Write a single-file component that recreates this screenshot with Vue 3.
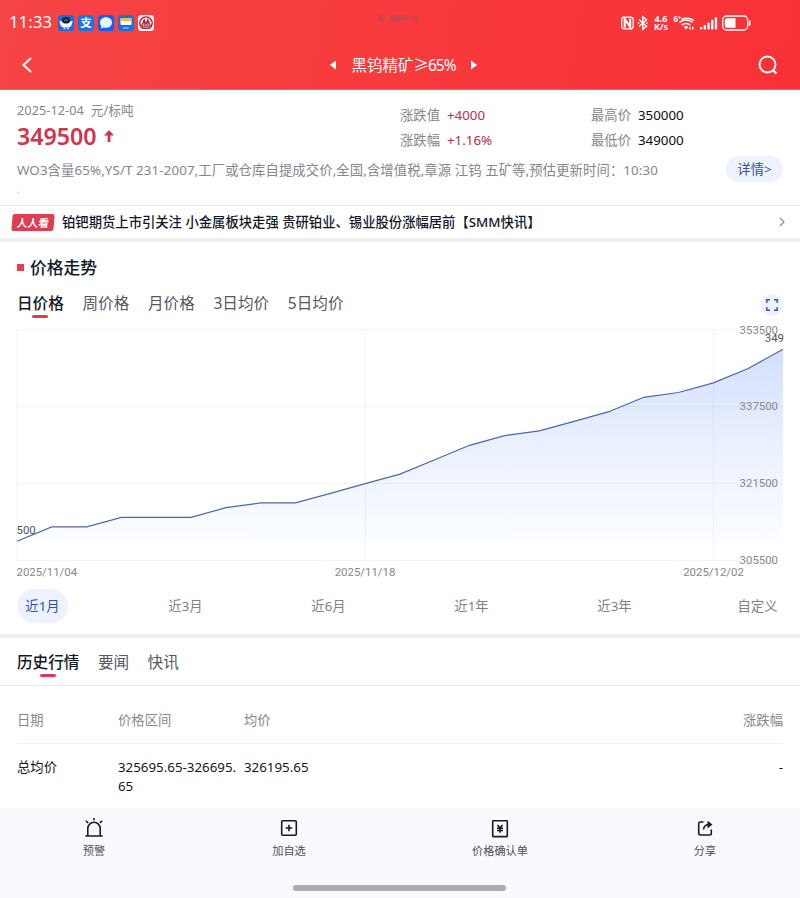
<script setup>
import { computed } from 'vue'

const priceTabs = ['日价格', '周价格', '月价格', '3日均价', '5日均价']
const ranges = ['近1月', '近3月', '近6月', '近1年', '近3年', '自定义']
const historyTabs = ['历史行情', '要闻', '快讯']

const prices = [
  309500, 312500, 312500, 314500, 314500, 314500, 316500, 317500, 317500, 319500, 321500, 323500,
  326500, 329500, 331500, 332500, 334500, 336500, 339500, 340500, 342500, 345500, 349500
]
const axis = [353500, 337500, 321500, 305500]
const left = 17
const right = 783
const toX = (i) => left + (i * (right - left)) / (prices.length - 1)
const toY = (v) => 230.5 - (v - 305500) * 0.0048
const line = computed(() => prices.map((v, i) => `${toX(i).toFixed(1)},${toY(v).toFixed(1)}`).join(' '))
const area = computed(() => `${line.value} ${right},${toY(prices[0])} ${left},${toY(prices[0])}`)
</script>

<template>
  <div class="page">
    <header class="top">
      <div class="status">
        <span class="clock">11:33</span>
        <div class="apps">
          <svg viewBox="0 0 16 16"><rect width="16" height="16" rx="3.5" fill="#176be0" /><path d="M1.500 5.500q2 1 3 1h7q2 0 3-1Q14.500 11 11 12.500H5Q1.500 11 1.500 5.500z" fill="#fff" /><rect x="4" y="2.300" width="8" height="6.200" rx="3" fill="#102334" /><path d="M6.300 5.500q1.700-1.500 3.400 0" stroke="#6fa6b5" fill="none" /><path d="M5.500 13.800h2M9 13.800h2" stroke="#fff" /></svg>
          <svg viewBox="0 0 16 16"><rect width="16" height="16" rx="3.5" fill="#1775ed" /><text x="8" y="12.2" text-anchor="middle" class="zhi">支</text></svg>
          <svg viewBox="0 0 16 16"><rect width="16" height="16" rx="3.5" fill="#0d63ed" /><path d="M8 2.2c3.6 0 6 2.3 6 5.3s-2.400 5.300-6 5.300c-1 0-1.700-.1-2.300-.4L3 13.500l.2-2.400C2.400 10.200 2 9 2 7.500c0-3 2.400-5.300 6-5.300z" fill="#e9f4ff" /></svg>
          <svg viewBox="0 0 16 16"><rect width="16" height="16" rx="3.500" fill="#176fe5" /><rect x="2.500" y="3" width="11" height="7" rx="1" fill="#fff" /><path d="M2.500 6V4q0-1 1-1h9q1 0 1 1v2z" fill="#e9bf54" /><path d="M5 13h6" stroke="#9dd4ff" stroke-width="1.500" stroke-dasharray="1.500 .5" /></svg>
          <svg viewBox="0 0 16 16"><rect width="16" height="16" rx="3.500" fill="#fff2f2" /><path d="M4.500 13.200A6.200 6.200 0 1 1 11.500 13.200z" fill="none" stroke="#a82535" stroke-width="1.400" /><path d="M3.500 11.200 6.200 4.500 8 9.500l1.800-5 2.700 6.700M6.200 6v5.200M9.800 6v5.200M3.500 11.300h9" fill="none" stroke="#a82535" stroke-width="1.100" /></svg>
        </div>
        <div class="camera"><i></i><b></b><i></i></div>
        <svg class="signals" viewBox="0 0 134 20">
          <g fill="none" stroke="#fff">
            <rect x="1.700" y="4.200" width="11.500" height="11.600" rx="2.500" stroke-width="1.300" />
            <path d="M4.700 14.500V6l5.500 8V5.500" stroke-width="2.100" />
            <path d="m19 6.500 7.500 6.800-3.700 3V3.700l3.700 3-7.500 6.800M17.800 10h1.500M26 10h1.500" stroke-width="1.500" />
            <path d="M59.500 9.300q6.500-4.500 13 0M61.800 12q4.200-3 8.400 0" stroke-width="1.600" />
            <path d="M61.500 6.300q6.500-2.800 12.500 1.200" stroke-width="1.500" />
            <rect x="102.700" y="3" width="25" height="14" rx="4" stroke-width="1.300" />
            <path d="M129.700 8v4" stroke-width="1.700" stroke-linecap="round" />
          </g>
          <g fill="#fff">
            <path d="M63.800 13.700q2.200-1.600 4.400 0L66 16.700zM70.600 13v4.200l-2-2.100zM72 13v4.200l2-2.100z" />
            <rect x="80" y="14" width="2.300" height="2.500" rx=".7" /><rect x="83.700" y="12" width="2.300" height="4.500" rx=".7" /><rect x="87.400" y="9.500" width="2.300" height="7" rx=".7" /><rect x="91.100" y="6.800" width="2.300" height="9.700" rx=".7" /><rect x="94.800" y="4" width="2.300" height="12.500" rx=".7" />
            <path d="M107 5.200h8.500v9.600H107q-2.200 0-2.200-2.200V7.400q0-2.200 2.200-2.200z" />
            <text x="41" y="8.800" text-anchor="middle" class="tiny">4.6</text>
            <text x="41" y="17.300" text-anchor="middle" class="tiny">K/s</text>
            <text x="53.500" y="8.500" class="six">6</text><path d="M58.300 4h2.600v1h-2.600zM59.100 3.200h1v2.600h-1z" />
          </g>
        </svg>
      </div>
      <nav class="nav">
        <svg class="back" viewBox="0 0 12 18"><path d="M10 2 2.500 9l7.500 7" fill="none" stroke="#fff" stroke-width="2" /></svg>
        <div class="product">
          <svg viewBox="0 0 6 10"><path d="M6 .5v9L0 5z" fill="#fff" /></svg>
          <span>黑钨精矿<b>≥65%</b></span>
          <svg viewBox="0 0 6 10"><path d="M0 .5v9L6 5z" fill="#fff" /></svg>
        </div>
        <svg class="search" viewBox="0 0 20 20"><circle cx="9.500" cy="9.500" r="8" fill="none" stroke="#fff" stroke-width="1.900" /><path d="m15.500 15.500 2.800 3" stroke="#fff" stroke-width="2.200" /></svg>
      </nav>
    </header>

    <section class="info">
      <div class="quote">
        <div class="main-quote">
          <div class="date">2025-12-04&nbsp; 元/标吨</div>
          <div class="price"><span>349500</span><svg viewBox="0 0 10 13"><path d="M5 0 10 5.500H6.400V12H3.600V5.500H0z" fill="#d0354d" /></svg></div>
        </div>
        <dl class="change">
          <div><dt>涨跌值</dt><dd class="red">+4000</dd></div>
          <div><dt>涨跌幅</dt><dd class="red">+1.16%</dd></div>
        </dl>
        <dl class="extremes">
          <div><dt>最高价</dt><dd>350000</dd></div>
          <div><dt>最低价</dt><dd>349000</dd></div>
        </dl>
      </div>
      <div class="desc">
        <p>WO3含量65%,YS/T 231-2007,工厂或仓库自提成交价,全国,含增值税,章源 江钨 五矿等,预估更新时间：10:30</p>
        <button class="detail">详情&gt;</button>
      </div>
      <div class="dot">.</div>
    </section>

    <section class="news">
      <span class="badge"><em>人人看</em></span>
      <p>铂钯期货上市引关注 小金属板块走强 贵研铂业、锡业股份涨幅居前【SMM快讯】</p>
      <svg viewBox="0 0 6 10"><path d="m1 1 4 4-4 4" fill="none" stroke="#888c94" stroke-width="1.200" /></svg>
    </section>

    <section class="trend">
      <h2><i></i>价格走势</h2>
      <div class="tabs price-tabs">
        <span v-for="(t, i) in priceTabs" :key="t" :class="{ active: i === 0 }">{{ t }}</span>
        <button class="expand"><svg viewBox="0 0 12 12"><path d="M.8 4V.8H4M8 .8h3.200V4M11.200 8v3.200H8M4 11.200H.8V8" fill="none" stroke="#3553a6" stroke-width="1.400" /></svg></button>
      </div>
      <svg class="chart" viewBox="0 0 800 258">
        <defs>
          <linearGradient id="fill" x1="0" y1="0" x2="0" y2="1">
            <stop offset="0" stop-color="#d3dffc" /><stop offset=".5" stop-color="#eaf0fe" /><stop offset="1" stop-color="#fbfdff" />
          </linearGradient>
        </defs>
        <polygon :points="area" fill="url(#fill)" />
        <g stroke="#8292b0" stroke-opacity=".09">
          <path v-for="v in axis" :key="v" :d="`M17 ${Math.round(toY(v)) - 0.5}H783`" />
          <path d="M16.500 0V230M365.500 0V230M713.500 0V230" />
        </g>
        <polyline :points="line" fill="none" stroke="#4a68ac" stroke-width="1.200" />
        <text v-for="v in axis" :key="v" x="778" :y="toY(v) + 3.5" text-anchor="end">{{ v }}</text>
        <text x="784" y="11.500" text-anchor="end" class="mark">349</text>
        <text x="16.500" y="203.500" class="mark">500</text>
        <text x="16.500" y="245.500">2025/11/04</text>
        <text x="365" y="245.500" text-anchor="middle">2025/11/18</text>
        <text x="713.500" y="245.500" text-anchor="middle">2025/12/02</text>
      </svg>
      <div class="ranges">
        <span v-for="(r, i) in ranges" :key="r" :class="{ active: i === 0 }">{{ r }}</span>
      </div>
    </section>

    <section class="history">
      <div class="tabs history-tabs">
        <span v-for="(t, i) in historyTabs" :key="t" :class="{ active: i === 0 }">{{ t }}</span>
      </div>
      <div class="row head"><span>日期</span><span>价格区间</span><span>均价</span><span>涨跌幅</span></div>
      <div class="row"><span>总均价</span><span class="wrap">325695.65-326695.65</span><span>326195.65</span><span>-</span></div>
    </section>

    <footer class="bottom">
      <div class="actions">
        <div class="alert">
          <svg viewBox="0 0 20 20"><path d="M3.800 18V10.500a6.200 6.200 0 0 1 12.400 0V18M1.300 18h17.400M10 0v2.300M1.800 2.900l2.400 1.900M18.200 2.900l-2.400 1.900" /></svg>
          <span>预警</span>
        </div>
        <div class="add">
          <svg viewBox="0 0 20 20"><rect x="2.700" y="2.700" width="14.600" height="14.600" rx="1" /><path d="M10 6.700v6.600M6.700 10h6.600" /></svg>
          <span>加自选</span>
        </div>
        <div class="confirm">
          <svg viewBox="0 0 20 20"><rect x="2.700" y="2.700" width="14.600" height="15.900" rx=".5" /><path d="m7.500 7 2.500 3 2.500-3M7 10.300h6M7 12.500h6M10 10v4.700" /></svg>
          <span>价格确认单</span>
        </div>
        <div class="share">
          <svg viewBox="0 0 20 20"><path d="M8.500 4H5.400Q3.700 4 3.700 5.700v9.600Q3.700 17 5.400 17h9.200q1.700 0 1.700-1.700V11.500M8.500 11.500q.5-5 6-5" /><path d="m12.500 2.700 5 3.900-5 3.900z" class="solid" /></svg>
          <span>分享</span>
        </div>
      </div>
      <i class="home"></i>
    </footer>
  </div>
</template>

<style>
body { background: #fff; }
</style>

<style scoped>
* { box-sizing: border-box; }
.page { width: 800px; height: 898px; overflow: hidden; background: #fff; color: #111827; font: 13.33px/20px "Noto Sans", "Noto Sans CJK SC", sans-serif; }
p, h2, dl, dd { margin: 0; }
button { border: 0; padding: 0; font: inherit; }
svg { display: block; flex: none; }

.top { height: 90px; background: linear-gradient(100deg, #f54444, #f83b3c 48%, #f83137); border-bottom: 1px solid #e96469; color: #fff; }
.status { display: flex; align-items: center; height: 45px; padding-left: 9px; }
.clock { width: 49px; margin-top: -1px; font-size: 17px; letter-spacing: -.1px; }
.apps { display: flex; gap: 4px; width: 321px; }
.apps svg { width: 16px; height: 16px; }
.zhi { font: 700 11.500px "Noto Sans CJK SC", sans-serif; fill: #fff; }
.camera { display: flex; align-items: center; gap: 5px; width: 239px; height: 10px; margin-top: -9px; }
.camera i { width: 6px; height: 6px; border-radius: 50%; background: #c8464c; }
.camera b { width: 18px; height: 6px; border-radius: 3px; background: #c8464c; }
.signals { width: 134px; height: 20px; margin-left: 2px; }
.tiny { font: 700 9px "Noto Sans", sans-serif; }
.six { font: 700 8px "Noto Sans", sans-serif; }
.nav { display: flex; align-items: center; justify-content: space-between; height: 40px; padding: 0 22px 0 21px; }
.back { width: 12px; height: 18px; }
.product { display: flex; align-items: center; justify-content: space-between; width: 147px; margin-left: 16px; font-size: 15.500px; white-space: nowrap; }
.product span { display: flex; margin-top: -1px; }
.product b { font-weight: 400; letter-spacing: -1px; }
.product svg { width: 6px; height: 10px; }
.search { width: 20px; height: 20px; }

.info { height: 115px; padding: 10px 17px 0; }
.quote { display: flex; height: 55px; }
.main-quote { width: 383px; }
.date { color: #84878d; font-size: 12.700px; letter-spacing: .07px; }
.price { display: flex; align-items: center; gap: 7px; margin-top: -1px; color: #d0354d; font-size: 23.200px; font-weight: 600; line-height: 34px; }
.price svg { width: 10px; height: 13px; margin-top: 1px; }
.change { width: 191px; }
.change, .extremes { padding-top: 3px; }
.change div, .extremes div { display: flex; height: 25px; line-height: 25px; }
dt { width: 47px; color: #83868c; }
dd { color: #0b0d11; }
.red { color: #b92e46; }
.desc { display: flex; align-items: center; justify-content: space-between; height: 28px; }
.desc p { padding-top: 2px; color: #84878d; letter-spacing: .11px; white-space: nowrap; }
.detail { width: 57px; height: 26px; border-radius: 13px; background: #edf2fe; color: #3553a6; line-height: 24px; }
.dot { height: 14px; padding-top: 1px; font-size: 10px; line-height: 10px; color: #aaa; }

.news { display: flex; align-items: center; height: 37px; padding: 0 15px 0 12px; border-top: 1px solid #eaebed; border-bottom: 4px solid #f0f0f0; }
.badge { display: flex; align-items: center; justify-content: center; width: 42px; height: 17px; margin-right: 8px; border-radius: 2px; background: #df3d50; color: #fff; transform: skewX(-5deg); }
.badge em { font-size: 10.700px; font-weight: 700; font-style: normal; }
.news p { flex: 1; font-weight: 500; white-space: nowrap; }
.news svg { width: 6px; height: 10px; }

.trend { height: 396px; border-bottom: 4px solid #f0f0f0; }
h2 { display: flex; align-items: center; height: 50px; padding: 2px 17px 0; font-size: 16.800px; font-weight: 500; }
h2 i { width: 7px; height: 7px; margin: -1px 6px 0 0; background: #df4052; }
.tabs { display: flex; font-size: 15.600px; color: #555960; }
.tabs span { display: flex; flex-direction: column; align-items: center; white-space: nowrap; }
.tabs .active { color: #101828; font-weight: 500; }
.tabs .active::after { content: ""; width: 16px; height: 3px; margin-top: 2px; border-radius: 2px; background: #d93c50; }
.price-tabs { height: 38px; padding: 1px 17px 0; gap: 18.700px; }
.expand { display: flex; align-items: center; justify-content: center; width: 22px; height: 22px; margin: 1px 0 0 auto; border-radius: 50%; background: #edf2fe; }
.expand svg { width: 12px; height: 12px; }
.chart { width: 800px; height: 258px; overflow: visible; }
.chart text { font: 11.400px Roboto, sans-serif; fill: #85888f; }
.chart .mark { fill: #505359; }
.ranges { display: flex; align-items: center; justify-content: space-between; height: 36px; padding: 0 17px; color: #7e8187; }
.ranges span { display: flex; align-items: center; justify-content: center; width: 51px; height: 34px; border-radius: 17px; }
.ranges .active { background: #edf2fe; color: #3553a6; }

.history { height: 170px; }
.history-tabs { height: 48px; padding: 14px 17px 0; gap: 18.500px; border-bottom: 1px solid #eaebed; }
.row { display: grid; grid-template-columns: 101px 126px 1fr auto; margin: 0 17px; padding-top: 14px; line-height: 19px; }
.head { height: 58px; padding-top: 25px; border-bottom: 1px solid #f0f1f2; color: #85888f; }
.wrap { width: 122px; word-break: break-all; }

.bottom { display: flex; flex-direction: column; align-items: center; height: 90px; background: #f9f9fe; }
.actions { display: grid; grid-template-columns: 188px 202px 220px 190px; width: 800px; height: 77px; padding-top: 10px; font-size: 11.200px; color: #4f5258; }
.actions div { display: flex; flex-direction: column; align-items: center; gap: 3px; }
.actions svg { width: 20px; height: 20px; fill: none; stroke: #1b1c20; stroke-width: 1.600; }
.actions .solid { fill: #1b1c20; stroke: none; }
.home { width: 213px; height: 6px; margin-right: 1px; border-radius: 3px; background: #acacb1; }
</style>
